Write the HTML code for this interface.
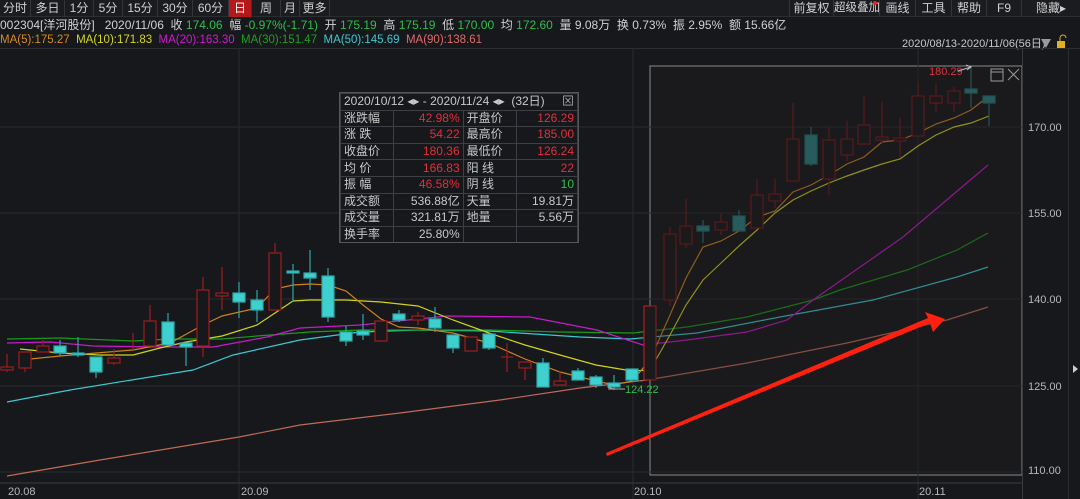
<!DOCTYPE html>
<html><head><meta charset="utf-8"><style>
*{margin:0;padding:0;box-sizing:border-box}
body{width:1080px;height:499px;background:#16181c;overflow:hidden;position:relative;font-family:"Liberation Sans","Noto Sans CJK SC",sans-serif;font-size:12px;color:#c8c8c8}
.tb{position:absolute;top:0;left:0;width:1080px;height:17px;background:#1b1c20;border-bottom:1px solid #2c2d31}
.tb span{position:absolute;top:0;height:17px;line-height:16px;text-align:center;border-right:1px solid #34353a;color:#d0d0d0;font-size:12px;white-space:nowrap;overflow:hidden}
.r2{position:absolute;top:17px;left:0;height:16px;line-height:16px;white-space:nowrap;font-size:12px;color:#d0d0d0;word-spacing:0}
.g{color:#2fbf4a}
.r3{position:absolute;top:33px;left:0;height:15px;line-height:15px;white-space:nowrap;font-size:11.5px}
svg{position:absolute;left:0;top:0}
.box{position:absolute;left:339px;top:92px;width:240px;height:151px;background:#17181b;border:1px solid #55565a;font-size:12px;overflow:hidden}
.box table{border-collapse:collapse;width:100%}
.box td{border:1px solid #3e3f44;height:16.6px;padding:0 3px;line-height:15px;color:#c8c8c8;white-space:nowrap}
.box td.n{text-align:right;color:#e0303a}
.box td.w{text-align:right;color:#c8c8c8}
</style></head><body>
<div class="tb">
<span style="left:0;width:31px">分时</span><span style="left:31px;width:34px">多日</span><span style="left:65px;width:29px">1分</span><span style="left:94px;width:29px">5分</span><span style="left:123px;width:35px">15分</span><span style="left:158px;width:35px">30分</span><span style="left:193px;width:36px">60分</span><span style="left:229px;width:23px;background:#b3191b;color:#fff">日</span><span style="left:252px;width:29px">周</span><span style="left:281px;width:19px">月</span><span style="left:300px;width:30px">更多</span>
<span style="left:789px;width:45px;border-left:1px solid #34353a">前复权</span><span style="left:834px;width:46px;font-size:11.5px">超级叠加<i style="position:absolute;right:2px;top:1px;width:4px;height:4px;border-radius:2px;background:#f02020"></i></span><span style="left:880px;width:36px">画线</span><span style="left:916px;width:36px">工具</span><span style="left:952px;width:35px">帮助</span><span style="left:987px;width:35px">F9</span><span style="left:1022px;width:58px;border:none">隐藏▸</span>
</div>
<div class="r2">002304[洋河股份]&nbsp;&nbsp; 2020/11/06&nbsp; 收 <span class="g">174.06</span>&nbsp; 幅 <span class="g">-0.97%(-1.71)</span>&nbsp; 开 <span class="g">175.19</span>&nbsp; 高 <span class="g">175.19</span>&nbsp; 低 <span class="g">170.00</span>&nbsp; 均 <span class="g">172.60</span>&nbsp; 量 9.08万&nbsp; 换 0.73%&nbsp; 振 2.95%&nbsp; 额 15.66亿</div>
<div class="r3"><span style="color:#d88a1c">MA(5):175.27</span>&nbsp; <span style="color:#d6d61a">MA(10):171.83</span>&nbsp; <span style="color:#d01ad0">MA(20):163.30</span>&nbsp; <span style="color:#1fa01f">MA(30):151.47</span>&nbsp; <span style="color:#3ec8d0">MA(50):145.69</span>&nbsp; <span style="color:#e06a6a">MA(90):138.61</span></div>
<div style="position:absolute;top:35px;left:902px;font-size:11px;color:#c8c8c8;text-decoration:underline">2020/08/13-2020/11/06(56日)</div>
<svg width="1080" height="499" viewBox="0 0 1080 499">
<rect x="0" y="48" width="1080" height="1" fill="#2c2d31"/>
<rect x="650" y="66" width="372" height="409" fill="#1b1b1e" stroke="#8a8a8c" stroke-width="1"/>
<g stroke="#2a2b2f" stroke-width="1">
<line x1="0" y1="127" x2="1022" y2="127"/><line x1="0" y1="213" x2="1022" y2="213"/><line x1="0" y1="299" x2="1022" y2="299"/><line x1="0" y1="386" x2="1022" y2="386"/><line x1="0" y1="472" x2="1022" y2="472"/>
<line x1="239" y1="48" x2="239" y2="499"/><line x1="633" y1="48" x2="633" y2="499"/><line x1="918" y1="48" x2="918" y2="499"/>
</g>
<line x1="0" y1="483" x2="1022" y2="483" stroke="#3a3b3f"/>
<line x1="1022.5" y1="48" x2="1022.5" y2="499" stroke="#3a3b3f"/>
<line x1="1068.5" y1="48" x2="1068.5" y2="499" stroke="#2c2d31"/>
<polygon points="1041,39 1051,39 1046,48" fill="#9a9a9a"/>
<rect x="1057" y="41" width="8" height="7" fill="#e0b020"/><path d="M1060 41 v-3 a3 3 0 0 1 6 0" stroke="#e0b020" fill="none"/>
<polygon points="1073,365 1078,369 1073,373" fill="#ccc"/>
<g font-size="11" fill="#b8b8b8" font-family="Liberation Sans">
<text x="1028" y="131">170.00</text><text x="1028" y="217">155.00</text><text x="1028" y="303">140.00</text><text x="1028" y="390">125.00</text><text x="1028" y="474">110.00</text>
<text x="8" y="495">20.08</text><text x="241" y="495">20.09</text><text x="634" y="495">20.10</text><text x="919" y="495">20.11</text>
</g>
<g fill="none" stroke-width="1.2">
<polyline stroke="#c06a58" points="7,476 100,460 239,437 300,425 400,413 500,400 580,388 647,380 747,363 847,343 947,320 988,307"/>
<polyline stroke="#3ec8d0" points="7,402 70,390 193,370 233,355 300,340 360,332 420,330 489,331 580,337 630,339 697,333 780,317 873,300 957,277 988,267"/>
<polyline stroke="#1a9a1a" points="7,339 60,338 133,341 170,339 222,339 257,336 310,332 360,330 418,330 489,330 560,332 633,333 687,327 747,317 813,300 840,290 907,270 957,250 988,233"/>
<polyline stroke="#c81ac8" points="7,343 50,342 93,346 167,347 213,347 267,337 300,328 360,325 447,316 530,317 597,330 643,345 687,340 747,332 787,320 813,300 903,237 988,165"/>
<polyline stroke="#d2d21a" points="20,349 60,353 100,355 133,355 160,348 186,342 222,336 257,325 293,301 310,300 346,300 381,302 418,306 453,320 489,333 525,345 560,355 596,365 632,371 650,370 670,335 686,305 703,280 721,263 739,246 757,230 775,213 793,200 811,191 829,183 847,176 864,170 882,164 900,159 918,146 936,135 954,127 971,123 989,116"/>
<polyline stroke="#d0801e" points="20,360 60,356 133,350 170,343 203,325 222,316 257,308 275,289 293,285 310,284 328,285 346,291 363,305 381,319 399,327 418,328 453,333 489,343 525,359 560,372 596,381 614,385 632,381 650,360 670,315 686,278 703,247 721,241 739,231 757,217 775,211 793,192 811,185 829,175 847,164 864,157 882,142 900,140 918,133 936,124 954,118 971,110 989,96"/>
</g>
<g stroke="#a01c1c" fill="#16181c" stroke-width="1.2">
<line x1="7" y1="354" x2="7" y2="372"/><rect x="1" y="367" width="12" height="3"/>
<line x1="25" y1="352" x2="25" y2="372"/><rect x="19" y="352" width="12" height="16"/>
<line x1="43" y1="340" x2="43" y2="352"/><rect x="37" y="346" width="12" height="6"/>
<line x1="114" y1="349" x2="114" y2="365"/><rect x="108" y="358" width="12" height="5"/>
<line x1="133" y1="333" x2="133" y2="350"/>
<line x1="150" y1="305" x2="150" y2="346"/><rect x="144" y="321" width="12" height="25"/>
<line x1="203" y1="277" x2="203" y2="357"/><rect x="197" y="290" width="12" height="56"/>
<line x1="222" y1="267" x2="222" y2="310"/><rect x="216" y="293" width="12" height="3"/>
<line x1="275" y1="243" x2="275" y2="310"/><rect x="269" y="253" width="12" height="57"/>
<line x1="381" y1="321" x2="381" y2="342"/><rect x="375" y="321" width="12" height="20"/>
<line x1="418" y1="312" x2="418" y2="325"/><rect x="412" y="316" width="12" height="4"/>
<rect x="465" y="337" width="12" height="14"/>
<line x1="507" y1="343" x2="507" y2="372"/><line x1="501" y1="357" x2="513" y2="357"/>
<line x1="525" y1="362" x2="525" y2="380"/><rect x="519" y="362" width="12" height="6"/>
<line x1="560" y1="371" x2="560" y2="385"/><rect x="554" y="381" width="12" height="4"/>
</g>
<g stroke="#2fa8a8" fill="#3ecfcf" stroke-width="1.2">
<line x1="60" y1="340" x2="60" y2="356"/><rect x="54" y="346" width="12" height="7"/>
<line x1="78" y1="337" x2="78" y2="357"/><rect x="72" y="353" width="12" height="2"/>
<line x1="96" y1="357" x2="96" y2="378"/><rect x="90" y="357" width="12" height="15"/>
<line x1="168" y1="313" x2="168" y2="346"/><rect x="162" y="322" width="12" height="23"/>
<line x1="186" y1="343" x2="186" y2="366"/><rect x="180" y="343" width="12" height="4"/>
<line x1="239" y1="282" x2="239" y2="318"/><rect x="233" y="293" width="12" height="9"/>
<line x1="257" y1="290" x2="257" y2="322"/><rect x="251" y="300" width="12" height="10"/>
<line x1="293" y1="264" x2="293" y2="302"/><rect x="287" y="271" width="12" height="2"/>
<line x1="310" y1="250" x2="310" y2="290"/><rect x="304" y="273" width="12" height="5"/>
<line x1="328" y1="268" x2="328" y2="322"/><rect x="322" y="276" width="12" height="41"/>
<line x1="346" y1="326" x2="346" y2="346"/><rect x="340" y="332" width="12" height="9"/>
<line x1="363" y1="314" x2="363" y2="340"/><rect x="357" y="331" width="12" height="4"/>
<line x1="399" y1="310" x2="399" y2="322"/><rect x="393" y="314" width="12" height="6"/>
<line x1="435" y1="307" x2="435" y2="332"/><rect x="429" y="319" width="12" height="9"/>
<line x1="453" y1="335" x2="453" y2="353"/><rect x="447" y="335" width="12" height="13"/>
<line x1="489" y1="334" x2="489" y2="350"/><rect x="483" y="334" width="12" height="14"/>
<line x1="543" y1="358" x2="543" y2="387"/><rect x="537" y="363" width="12" height="24"/>
<line x1="578" y1="368" x2="578" y2="380"/><rect x="572" y="371" width="12" height="9"/>
<line x1="596" y1="375" x2="596" y2="388"/><rect x="590" y="377" width="12" height="8"/>
<line x1="614" y1="375" x2="614" y2="390"/><rect x="608" y="383" width="12" height="4"/>
<line x1="632" y1="369" x2="632" y2="381"/><rect x="626" y="369" width="12" height="11"/>
</g>
<g stroke="#7a1a1a" fill="#1b1b1e" stroke-width="1.2">
<rect x="644" y="306" width="12" height="74" stroke="#b02020"/>
<line x1="670" y1="227" x2="670" y2="306"/><rect x="664" y="234" width="12" height="66"/>
<line x1="686" y1="199" x2="686" y2="248"/><rect x="680" y="226" width="12" height="18"/>
<line x1="721" y1="213" x2="721" y2="235"/><rect x="715" y="222" width="12" height="8"/>
<line x1="757" y1="179" x2="757" y2="228"/><rect x="751" y="195" width="12" height="33"/>
<line x1="775" y1="179" x2="775" y2="208"/><rect x="769" y="194" width="12" height="7"/>
<line x1="793" y1="103" x2="793" y2="181"/><rect x="787" y="139" width="12" height="42"/>
<line x1="829" y1="127" x2="829" y2="195"/><rect x="823" y="140" width="12" height="39"/>
<line x1="847" y1="121" x2="847" y2="161"/><rect x="841" y="139" width="12" height="16"/>
<line x1="864" y1="96" x2="864" y2="144"/><rect x="858" y="125" width="12" height="19"/>
<line x1="882" y1="102" x2="882" y2="144"/><rect x="876" y="137" width="12" height="3"/>
<line x1="900" y1="118" x2="900" y2="158"/><rect x="894" y="138" width="12" height="3"/>
<line x1="918" y1="83" x2="918" y2="136"/><rect x="912" y="96" width="12" height="40"/>
<line x1="936" y1="84" x2="936" y2="112"/><rect x="930" y="96" width="12" height="7"/>
<line x1="954" y1="87" x2="954" y2="112"/><rect x="948" y="91" width="12" height="12"/>
</g>
<g stroke="#2a7070" fill="#2e7f7f" stroke-width="1.2">
<line x1="703" y1="220" x2="703" y2="243"/><rect x="697" y="226" width="12" height="5"/>
<line x1="739" y1="210" x2="739" y2="231"/><rect x="733" y="216" width="12" height="15"/>
<line x1="811" y1="127" x2="811" y2="166"/><rect x="805" y="135" width="12" height="29"/>
<line x1="971" y1="67" x2="971" y2="108"/><rect x="965" y="89" width="12" height="4"/>
<line x1="989" y1="96" x2="989" y2="126"/><rect x="983" y="96" width="12" height="7"/>
</g>
<rect x="651" y="67" width="370" height="407" fill="rgba(27,27,30,0.35)"/>
<text x="929" y="75" font-size="11" fill="#e0303a">180.29</text>
<path d="M958 71 L971 67 M966 65 l5 2 -4 3" stroke="#bbb" fill="none"/>
<rect x="991" y="69" width="12" height="12" fill="none" stroke="#999"/><line x1="991" y1="72" x2="1003" y2="72" stroke="#999"/>
<path d="M1008 69 l11 11 M1019 69 l-11 11" stroke="#999"/>
<path d="M613 389 l-5 -2 M608 389 h17" stroke="#aaa" fill="none"/>
<text x="625" y="393" font-size="11" fill="#2fbf4a">124.22</text>
<polygon points="607,456 606,453 928,318 925,312 945,319 933,332 930,323" fill="#ff2010"/>
</svg>
<div class="box">
<table>
<tr><td colspan="4" style="white-space:nowrap">2020/10/12 ◂▸ - 2020/11/24 ◂▸&nbsp; (32日)<span style="float:right;color:#aaa">⊠</span></td></tr>
<tr><td>涨跌幅</td><td class="n">42.98%</td><td>开盘价</td><td class="n">126.29</td></tr>
<tr><td>涨 跌</td><td class="n">54.22</td><td>最高价</td><td class="n">185.00</td></tr>
<tr><td>收盘价</td><td class="n">180.36</td><td>最低价</td><td class="n">126.24</td></tr>
<tr><td>均 价</td><td class="n">166.83</td><td>阳 线</td><td class="n">22</td></tr>
<tr><td>振 幅</td><td class="n">46.58%</td><td>阴 线</td><td class="n" style="color:#2fbf4a">10</td></tr>
<tr><td>成交额</td><td class="w">536.88亿</td><td>天量</td><td class="w">19.81万</td></tr>
<tr><td>成交量</td><td class="w">321.81万</td><td>地量</td><td class="w">5.56万</td></tr>
<tr><td>换手率</td><td class="w">25.80%</td><td></td><td></td></tr>
</table>
</div>
</body></html>
